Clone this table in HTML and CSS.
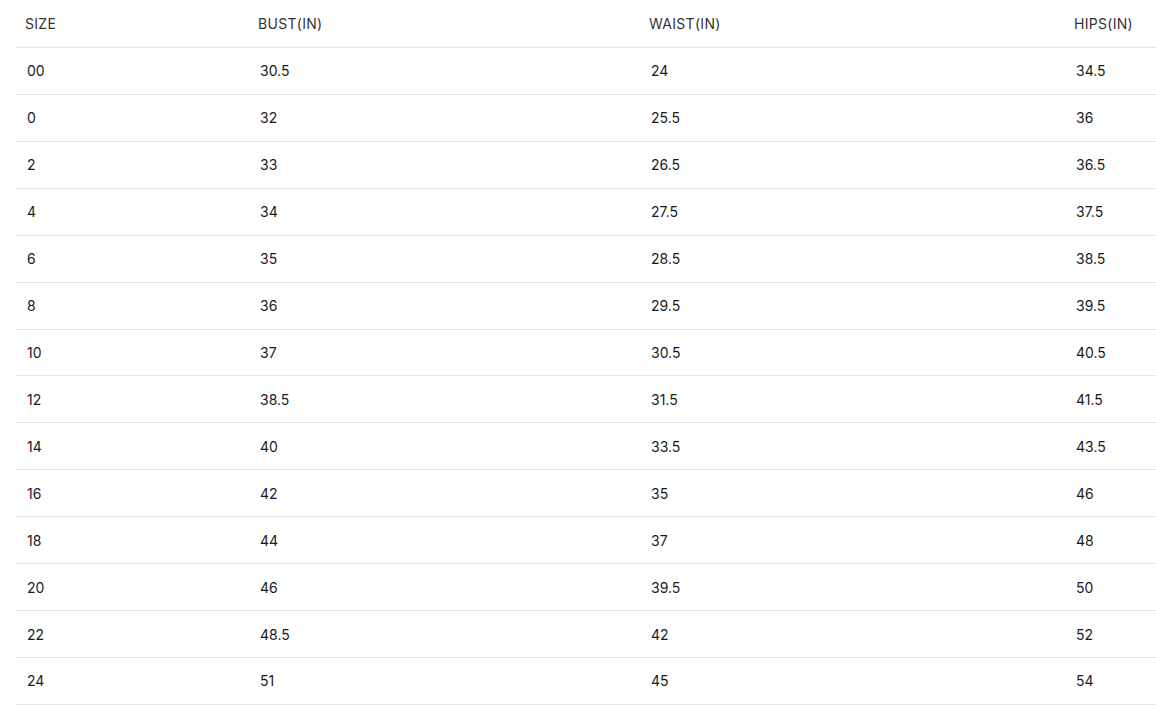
FILE: index.html
```html
<!DOCTYPE html>
<html lang="en">
<head>
<meta charset="utf-8">
<title>Size chart</title>
<link rel="stylesheet" href="styles.css">
</head>
<body>
<table class="size-table">
  <colgroup>
    <col class="c-size">
    <col class="c-bust">
    <col class="c-waist">
    <col class="c-hips">
  </colgroup>
  <thead>
    <tr><th>SIZE</th><th>BUST(IN)</th><th>WAIST(IN)</th><th>HIPS(IN)</th></tr>
  </thead>
  <tbody>
    <tr><td>00</td><td>30.5</td><td>24</td><td>34.5</td></tr>
    <tr><td>0</td><td>32</td><td>25.5</td><td>36</td></tr>
    <tr><td>2</td><td>33</td><td>26.5</td><td>36.5</td></tr>
    <tr><td>4</td><td>34</td><td>27.5</td><td>37.5</td></tr>
    <tr><td>6</td><td>35</td><td>28.5</td><td>38.5</td></tr>
    <tr><td>8</td><td>36</td><td>29.5</td><td>39.5</td></tr>
    <tr><td>10</td><td>37</td><td>30.5</td><td>40.5</td></tr>
    <tr><td>12</td><td>38.5</td><td>31.5</td><td>41.5</td></tr>
    <tr><td>14</td><td>40</td><td>33.5</td><td>43.5</td></tr>
    <tr><td>16</td><td>42</td><td>35</td><td>46</td></tr>
    <tr><td>18</td><td>44</td><td>37</td><td>48</td></tr>
    <tr><td>20</td><td>46</td><td>39.5</td><td>50</td></tr>
    <tr><td>22</td><td>48.5</td><td>42</td><td>52</td></tr>
    <tr><td>24</td><td>51</td><td>45</td><td>54</td></tr>
  </tbody>
</table>
</body>
</html>
```
FILE: styles.css
```css
html, body {
  margin: 0;
  padding: 0;
  background: #ffffff;
}
body {
  padding-left: 16px;
  font-family: Inter, "Liberation Sans", sans-serif;
  font-size: 14px;
  color: #1a1a1a;
  overflow: hidden;
}
.size-table {
  border-collapse: collapse;
  table-layout: fixed;
  width: 1140px;
}
.c-size { width: 233px; }
.c-bust { width: 391px; }
.c-waist { width: 425px; }
.c-hips { width: 91px; }
.size-table th {
  height: 47px;
  padding: 0 0 0 9px;
  text-align: left;
  font-weight: 400;
  letter-spacing: 0.3px;
  color: #333333;
  border-bottom: 1px solid #e6e6e6;
  box-shadow: inset 0 -6px 0 -5px #f4f4f4;
  vertical-align: middle;
  white-space: nowrap;
}
.size-table td {
  height: 45.93px;
  padding: 0 0 0 11px;
  text-align: left;
  color: #1a1a1a;
  border-bottom: 1px solid #e6e6e6;
  vertical-align: middle;
}
```
